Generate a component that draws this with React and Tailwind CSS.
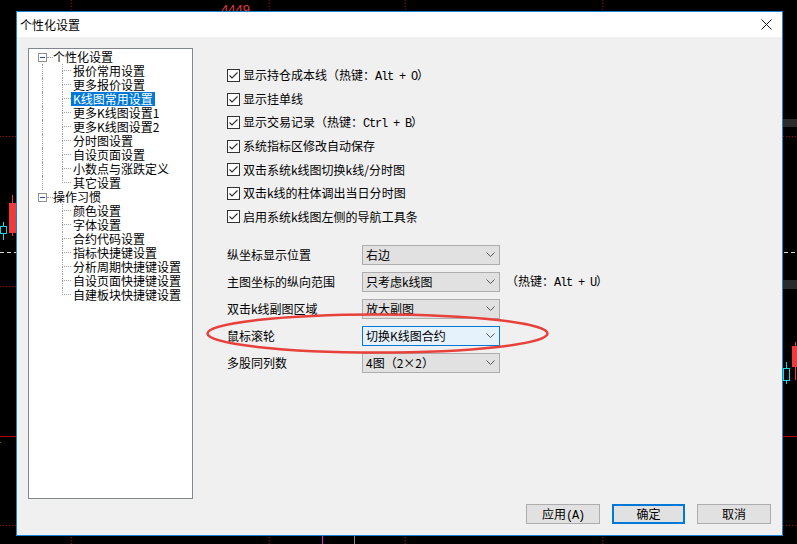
import React from 'react';

const FONT = "font-['Noto_Sans_CJK_SC','Liberation_Sans',sans-serif]";
const DOT = 'border-dotted border-[#a0a0a0]';

const Mono = ({ children }) => (
    <span className="font-['Liberation_Mono',monospace] tracking-[-1.2px]">{children}</span>
);

const groups = [
    {
        title: '个性化设置',
        items: [
            '报价常用设置',
            '更多报价设置',
            'K线图常用设置',
            '更多K线图设置1',
            '更多K线图设置2',
            '分时图设置',
            '自设页面设置',
            '小数点与涨跌定义',
            '其它设置',
        ],
    },
    {
        title: '操作习惯',
        items: [
            '颜色设置',
            '字体设置',
            '合约代码设置',
            '指标快捷键设置',
            '分析周期快捷键设置',
            '自设页面快捷键设置',
            '自建板块快捷键设置',
        ],
    },
];

const RootRow = ({ title }) => (
    <div className="flex h-[14px] items-center">
        <div className="w-[9px]" />
        <div className="w-[9px] h-[9px] border border-[#919191] bg-white flex items-center justify-center">
            <div className="w-[5px] h-px bg-[#1f4fa3]" />
        </div>
        <div className={`w-[6px] border-t ${DOT}`} />
        <span>{title}</span>
    </div>
);

const ChildRow = ({ text, last, rootLine, selected }) => (
    <div className="flex h-[14px]">
        <div className="w-[13px]" />
        <div className={`w-[20px] ${rootLine ? `border-l ${DOT}` : ''}`} />
        <div className="flex flex-col w-[9px]">
            <div className={`h-[7px] border-l border-b ${DOT}`} />
            <div className={`h-[7px] ${last ? '' : `border-l ${DOT}`}`} />
        </div>
        <span className={`px-[2px] h-[14px] ${selected ? 'bg-[#0078d7] text-white' : ''}`}>{text}</span>
    </div>
);

const Tree = () => (
    <div className="w-[165px] h-[451px] border border-[#828790] bg-white pt-[1px] text-[12px] leading-[14px] text-black">
        {groups.map((g, gi) => (
            <div key={g.title}>
                <RootRow title={g.title} />
                {g.items.map((it, i) => (
                    <ChildRow
                        key={it}
                        text={it}
                        last={i === g.items.length - 1}
                        rootLine={gi < groups.length - 1}
                        selected={it === 'K线图常用设置'}
                    />
                ))}
            </div>
        ))}
    </div>
);

const Check = ({ children }) => (
    <div className="flex items-center h-[23.5px]">
        <div className="w-[13px] h-[13px] border border-[#333333] bg-white flex items-center justify-center">
            <svg width="11" height="11" viewBox="0 0 11 11">
                <polyline points="1.5,5.5 4,8 9.5,2.5" fill="none" stroke="#333333" strokeWidth="1.2" />
            </svg>
        </div>
        <span className="ml-[3px]">{children}</span>
    </div>
);

const Select = ({ value, focused }) => (
    <div
        className={`w-[138px] h-[20px] border flex items-center pl-[3px] pr-[4px] ${
            focused ? 'bg-[#e5f1fb] border-[#0078d7]' : 'bg-[#e1e1e1] border-[#adadad]'
        }`}
    >
        <span className="flex-1">{value}</span>
        <svg width="9" height="5" viewBox="0 0 9 5">
            <polyline points="0.5,0.5 4.5,4.5 8.5,0.5" fill="none" stroke="#555" strokeWidth="1" />
        </svg>
    </div>
);

const FieldRow = ({ label, value, focused, extra }) => (
    <div className="flex items-center h-[20px]">
        <span className="w-[135px]">{label}</span>
        <Select value={value} focused={focused} />
        {extra && <span className="ml-[6px]">{extra}</span>}
    </div>
);

const Background = () => (
    <svg className="absolute inset-0" width="797" height="544" viewBox="0 0 797 544">
        {[71, 269, 405, 602].map((x) => (
            <line key={x} x1={x + 0.5} y1="0" x2={x + 0.5} y2="544" stroke="#a00000" strokeDasharray="1 2" />
        ))}
        <text x="221" y="13.5" fill="#e03a3a" fontSize="13" fontFamily="Liberation Sans">4449</text>
        {[136, 286, 525].map((y) => (
            <line key={y} x1="0" y1={y + 0.5} x2="16" y2={y + 0.5} stroke="#b00000" strokeDasharray="1 2" />
        ))}
        {[136, 525].map((y) => (
            <line key={'r' + y} x1="783" y1={y + 0.5} x2="797" y2={y + 0.5} stroke="#b00000" strokeDasharray="1 2" />
        ))}
        <line x1="0" y1="252.5" x2="797" y2="252.5" stroke="#d8d8d8" strokeDasharray="4 3" />
        <line x1="0" y1="436.5" x2="797" y2="436.5" stroke="#c00000" />
        <rect x="783" y="119" width="14" height="8" fill="#2a2a2a" />
        <rect x="783" y="280" width="14" height="9" fill="#2a2a2a" />
        <line x1="12.5" y1="195" x2="12.5" y2="236" stroke="#ef3b3b" />
        <rect x="9" y="203" width="7" height="30" fill="#ef3b3b" />
        <line x1="3.5" y1="222" x2="3.5" y2="240" stroke="#18d6e6" />
        <rect x="0.5" y="226.5" width="6" height="7" fill="#000" stroke="#18d6e6" />
        <line x1="795.5" y1="342" x2="795.5" y2="380" stroke="#ef3b3b" />
        <rect x="792" y="346" width="5" height="21" fill="#ef3b3b" />
        <line x1="786.5" y1="362" x2="786.5" y2="384" stroke="#18d6e6" />
        <rect x="783.5" y="368.5" width="6" height="12" fill="#000" stroke="#18d6e6" />
        <line x1="322.5" y1="536" x2="322.5" y2="544" stroke="#e020e0" />
        <line x1="354.5" y1="536" x2="354.5" y2="544" stroke="#888" />
        <rect x="0" y="442" width="1" height="1" fill="#0a0" />
    </svg>
);

export default function App() {
    return (
        <div className={`relative w-[797px] h-[544px] bg-black overflow-hidden pl-[16px] pt-[11px] ${FONT} text-[12px] leading-[14px] text-black`}>
            <Background />
            <div className="relative w-[767px] h-[525px] border border-[#1883d7] bg-[#f0f0f0] flex flex-col">
                <div className="h-[25px] bg-white flex items-center pl-[3px] pr-[10px]">
                    <span className="flex-1 text-[12px]">个性化设置</span>
                    <svg width="11" height="11" viewBox="0 0 11 11">
                        <path d="M0.5 0.5 L10.5 10.5 M10.5 0.5 L0.5 10.5" stroke="#111" strokeWidth="1" />
                    </svg>
                </div>
                <div className="flex flex-col pt-[11px] px-[11px]">
                    <div className="flex h-[451px]">
                        <Tree />
                        <div className="ml-[34px] pt-[16px]">
                            <Check>显示持仓成本线（热键：<Mono>Alt + O</Mono>）</Check>
                            <Check>显示挂单线</Check>
                            <Check>显示交易记录（热键：<Mono>Ctrl + B</Mono>）</Check>
                            <Check>系统指标区修改自动保存</Check>
                            <Check>双击系统k线图切换k线/分时图</Check>
                            <Check>双击k线的柱体调出当日分时图</Check>
                            <Check>启用系统k线图左侧的导航工具条</Check>
                            <div className="flex flex-col gap-[7px] mt-[16px]">
                                <FieldRow label="纵坐标显示位置" value="右边" />
                                <FieldRow
                                    label="主图坐标的纵向范围"
                                    value="只考虑k线图"
                                    extra={<>（热键：<Mono>Alt + U</Mono>）</>}
                                />
                                <FieldRow label="双击k线副图区域" value="放大副图" />
                                <FieldRow label="鼠标滚轮" value="切换K线图合约" focused />
                                <FieldRow label="多股同列数" value="4图（2×2）" />
                            </div>
                        </div>
                    </div>
                    <div className="flex justify-end gap-[12px] mt-[5px]">
                        <button className="w-[74px] h-[20px] bg-[#e1e1e1] border border-[#adadad] leading-[18px]">
                            应用<Mono>(A)</Mono>
                        </button>
                        <button className="w-[73px] h-[20px] bg-[#e1e1e1] border-2 border-[#0078d7] leading-[16px]">
                            确定
                        </button>
                        <button className="w-[74px] h-[20px] bg-[#e1e1e1] border border-[#adadad] leading-[18px]">
                            取消
                        </button>
                    </div>
                </div>
            </div>
            <svg className="absolute left-[205px] top-[312px]" width="346" height="44" viewBox="0 0 346 44">
                <ellipse cx="172.5" cy="21.5" rx="170" ry="19" fill="none" stroke="#e8403a" strokeWidth="2.5" />
            </svg>
        </div>
    );
}
